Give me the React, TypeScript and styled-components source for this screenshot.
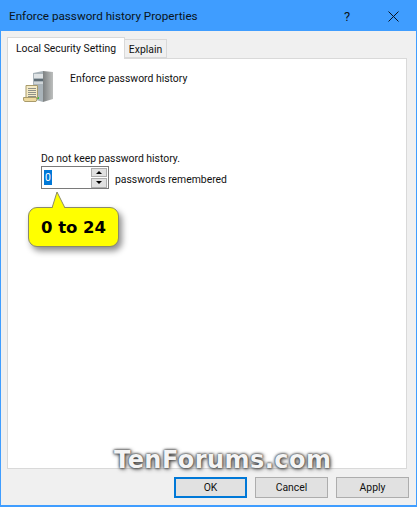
import React from "react";
import styled, { createGlobalStyle } from "styled-components";

const GlobalStyle = createGlobalStyle`
  html, body {
    margin: 0;
    padding: 0;
    background: #f0f0f0;
  }
  * {
    box-sizing: border-box;
  }
`;

const Window = styled.div`
  position: relative;
  width: 417px;
  height: 507px;
  display: flex;
  flex-direction: column;
  background: #f0f0f0;
  border: 1px solid #3f9dff;
  border-top: none;
  border-bottom-width: 2px;
  font-family: Roboto, "Noto Sans", sans-serif;
  font-size: 10.4px;
  color: #111;
  overflow: hidden;
`;

const TitleBar = styled.div`
  height: 31px;
  flex: none;
  display: flex;
  align-items: center;
  padding: 1px 0 0 8px;
  background: #3f9dff;
  font-size: 11.7px;
  color: #0a1420;
`;

const TitleText = styled.span`
  flex: 1;
`;

const TitleButton = styled.span`
  width: 46px;
  display: flex;
  justify-content: center;
  align-items: center;
  font-size: 13px;
`;

const TabStrip = styled.div`
  margin: 6px 9px 0 6px;
  height: 21px;
  display: flex;
  align-items: flex-end;
  flex: none;
`;

const Tab = styled.div<{ $active?: boolean }>`
  height: ${(p) => (p.$active ? "22px" : "19px")};
  margin-bottom: ${(p) => (p.$active ? "-1px" : "0")};
  padding: ${(p) => (p.$active ? "4px 0 0" : "3px 0 0")};
  width: ${(p) => (p.$active ? "118px" : "42px")};
  text-align: center;
  background: ${(p) => (p.$active ? "#fff" : "#f0f0f0")};
  border: 1px solid #d9d9d9;
  border-bottom: ${(p) => (p.$active ? "none" : "1px solid #d9d9d9")};
  border-left: ${(p) => (p.$active ? "1px solid #d9d9d9" : "none")};
  position: relative;
  z-index: ${(p) => (p.$active ? 1 : 0)};
  white-space: nowrap;
`;

const Panel = styled.div`
  margin: 0 9px 0 6px;
  height: 411px;
  flex: none;
  background: #fff;
  border: 1px solid #d9d9d9;
  padding: 12px 0 0 14px;
`;

const Header = styled.div`
  display: flex;
  align-items: flex-start;
  gap: 16px;
`;

const PolicyName = styled.div`
  padding-top: 1px;
  line-height: 14px;
`;

const Setting = styled.div`
  margin: 49px 0 0 19px;
  display: flex;
  flex-direction: column;
  gap: 0;
`;

const SettingLabel = styled.div`
  line-height: 14px;
`;

const SpinRow = styled.div`
  display: flex;
  align-items: center;
  gap: 6px;
`;

const RowLabel = styled.span`
  padding-top: 4px;
`;

const SpinBox = styled.div`
  width: 68px;
  height: 23px;
  display: flex;
  align-items: center;
  justify-content: space-between;
  padding: 0 1px 0 2px;
  background: #fff;
  border: 1px solid #7a7a7a;
`;

const Selected = styled.span`
  background: #0078d7;
  color: #fff;
  line-height: 15px;
  padding: 0 1px;
`;

const SpinButtons = styled.div`
  display: flex;
  flex-direction: column;
  gap: 1px;
`;

const SpinButton = styled.div`
  width: 16px;
  height: 9.5px;
  display: flex;
  align-items: center;
  justify-content: center;
  background: #e1e1e1;
  border: 1px solid #adadad;
`;

const Arrow = styled.span<{ $down?: boolean }>`
  width: 0;
  height: 0;
  border-left: 3px solid transparent;
  border-right: 3px solid transparent;
  border-${(p) => (p.$down ? "top" : "bottom")}: 3px solid #000;
`;

const Footer = styled.div`
  display: flex;
  justify-content: flex-end;
  gap: 8px;
  margin: 8px 7px 0 0;
`;

const DialogButton = styled.div<{ $primary?: boolean }>`
  width: 73px;
  height: 21px;
  display: flex;
  align-items: center;
  justify-content: center;
  background: #e1e1e1;
  border: ${(p) => (p.$primary ? "2px solid #0078d7" : "1px solid #adadad")};
`;

const Callout = styled.div`
  position: absolute;
  left: 27px;
  top: 207px;
  width: 91px;
  height: 40px;
  display: flex;
  align-items: center;
  justify-content: center;
  background: #ffff00;
  border: 1px solid #8a8a6a;
  border-radius: 9px;
  box-shadow: 3px 4px 6px rgba(0, 0, 0, 0.45);
  font-family: "DejaVu Sans", sans-serif;
  font-weight: 700;
  font-size: 16.5px;
  color: #000;
`;

const CalloutTail = styled.svg`
  position: absolute;
  left: 50px;
  top: 191px;
  z-index: 1;
`;

const Watermark = styled.div`
  position: absolute;
  left: 113px;
  top: 446px;
  font-family: "DejaVu Sans", sans-serif;
  font-weight: 700;
  font-size: 24px;
  letter-spacing: 0.45px;
  color: #f4f4f4;
  text-shadow: 0 0 3px #444, 1px 1px 4px #444, 0 0 2px #666;
`;

const ServerIcon = () => (
  <svg width="32" height="32" viewBox="0 0 32 32">
    <defs>
      <linearGradient id="side" x1="0" y1="0" x2="1" y2="0">
        <stop offset="0" stopColor="#7d8182" />
        <stop offset="1" stopColor="#bdbfbe" />
      </linearGradient>
    </defs>
    <path d="M11 2 L21 0 V31 L14 29 L11 24 Z" fill="#aab4ba" />
    <path d="M21 0 L31 1 V28 L21 31 Z" fill="url(#side)" />
    <path d="M12 3 H21 V7 H12 Z" fill="#dfe3e5" />
    <path d="M12 8 H21 V10 H12 Z" fill="#5f6d75" />
    <path d="M12 11 H21 V13 H12 Z" fill="#cfd5d8" />
    <rect x="15" y="26" width="2" height="2" fill="#43c043" />
    <path d="M4 14.5 H15.5 V27 H4 Z" fill="#f4eac6" stroke="#a99b6b" strokeWidth="1" />
    <path d="M6 17.5 H14 M6 19.5 H14 M6 21.5 H14 M6 23.5 H14 M6 25.5 H14" stroke="#8f9189" strokeWidth="1" />
    <path d="M1.5 26.5 H14.5 Q15.5 29 14 30.5 H3 Q1 30.5 1.5 26.5 Z" fill="#eeda9f" stroke="#a99b6b" strokeWidth="1" />
  </svg>
);

export default function App() {
  return (
    <>
      <GlobalStyle />
      <Window>
        <TitleBar>
          <TitleText>Enforce password history Properties</TitleText>
          <TitleButton>?</TitleButton>
          <TitleButton>
            <svg width="11" height="11" viewBox="0 0 11 11">
              <path d="M0.5 0.5 L10.5 10.5 M10.5 0.5 L0.5 10.5" stroke="#0a1420" strokeWidth="1" />
            </svg>
          </TitleButton>
        </TitleBar>
        <TabStrip>
          <Tab $active>Local Security Setting</Tab>
          <Tab>Explain</Tab>
        </TabStrip>
        <Panel>
          <Header>
            <ServerIcon />
            <PolicyName>Enforce password history</PolicyName>
          </Header>
          <Setting>
            <SettingLabel>Do not keep password history.</SettingLabel>
            <SpinRow>
              <SpinBox>
                <Selected>0</Selected>
                <SpinButtons>
                  <SpinButton>
                    <Arrow />
                  </SpinButton>
                  <SpinButton>
                    <Arrow $down />
                  </SpinButton>
                </SpinButtons>
              </SpinBox>
              <RowLabel>passwords remembered</RowLabel>
            </SpinRow>
          </Setting>
        </Panel>
        <Footer>
          <DialogButton $primary>OK</DialogButton>
          <DialogButton>Cancel</DialogButton>
          <DialogButton>Apply</DialogButton>
        </Footer>
        <Callout>0 to 24</Callout>
        <CalloutTail width="16" height="18" viewBox="0 0 16 18">
          <path d="M1 17 L6 1 L14 17" fill="#ffff00" stroke="#8a8a6a" strokeWidth="1" />
          <path d="M2 17 H13 V18 H2 Z" fill="#ffff00" />
        </CalloutTail>
        <Watermark>TenForums.com</Watermark>
      </Window>
    </>
  );
}
